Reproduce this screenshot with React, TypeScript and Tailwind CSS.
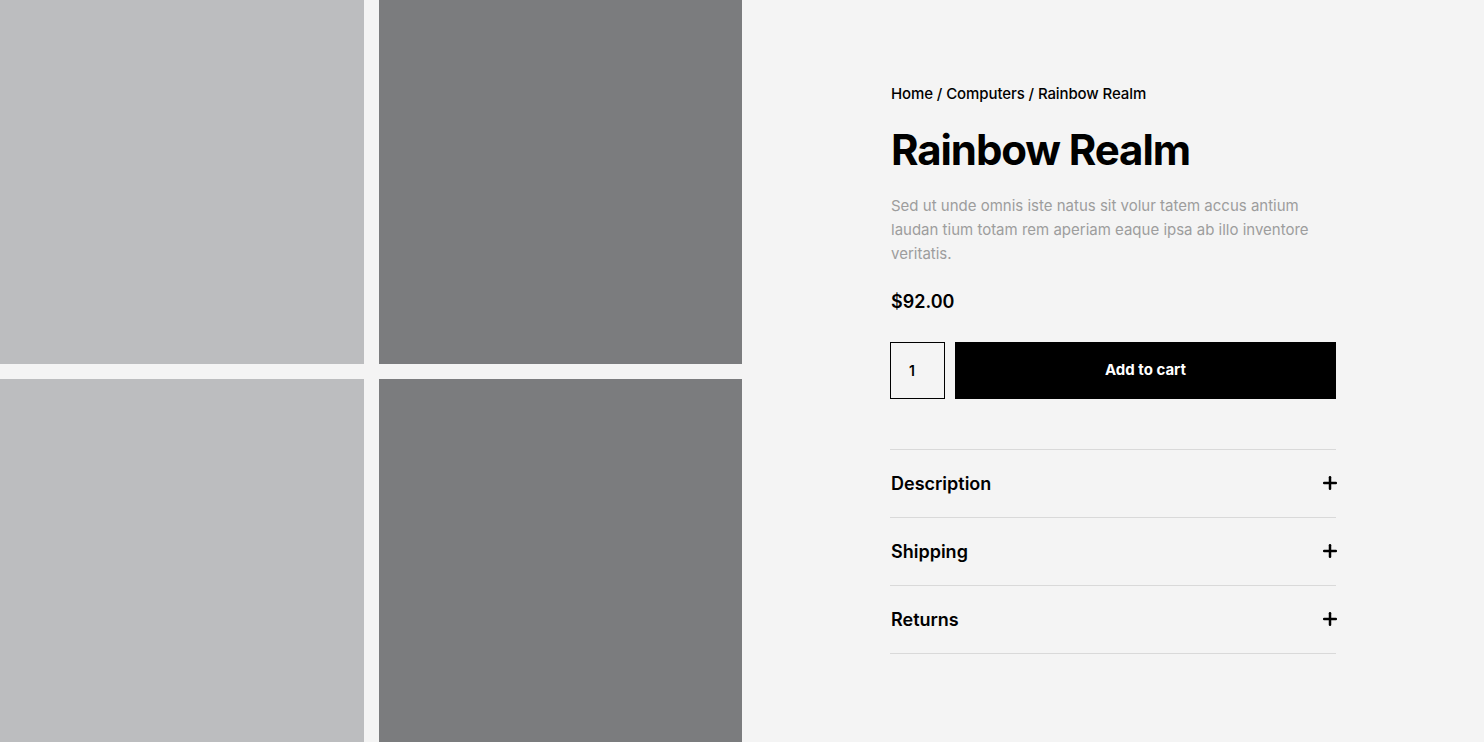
import { Plus } from "lucide-react";

const font = { fontFamily: "Inter, 'Noto Sans', sans-serif" };

const sections = ["Description", "Shipping", "Returns"];

export default function App() {
  return (
    <div className="flex h-[742px] w-full bg-[#f4f4f4] text-black" style={font}>
      <div className="grid h-[742px] w-[742px] shrink-0 grid-cols-2 grid-rows-2 gap-[15px]">
        <div className="bg-[#bcbdbf]" />
        <div className="bg-[#7b7c7e]" />
        <div className="bg-[#bcbdbf]" />
        <div className="bg-[#7b7c7e]" />
      </div>
      <div className="flex flex-1 items-center justify-center">
        <div className="w-[446px] pb-[7px]">
          <nav className="pl-px text-[15px] font-medium leading-6 tracking-[-0.1px]">
            Home / Computers / Rainbow Realm
          </nav>
          <h1 className="mt-[16px] pl-px text-[42px] font-bold leading-[56px] tracking-[-1.1px]">
            Rainbow Realm
          </h1>
          <p className="mt-[16px] pl-px text-[15px] leading-6 text-[#9d9d9d]">
            Sed ut unde omnis iste natus sit volur tatem accus antium laudan tium totam rem aperiam
            eaque ipsa ab illo inventore veritatis.
          </p>
          <div className="mt-[24px] pl-px text-[18px] font-semibold leading-6">$92.00</div>
          <div className="mt-[28px] flex gap-[10px]">
            <input
              defaultValue="1"
              className="h-[57px] w-[55px] border border-black bg-transparent px-[18px] text-[14px] font-semibold outline-none"
            />
            <button className="h-[57px] flex-1 bg-black text-[15px] font-bold text-white">
              Add to cart
            </button>
          </div>
          <div className="mt-[50px] border-b border-[#d9d9d9]">
            {sections.map((s) => (
              <div
                key={s}
                className="flex h-[68px] items-center justify-between border-t border-[#d9d9d9] pl-px"
              >
                <span className="text-[18px] font-semibold">{s}</span>
                <Plus size={20} strokeWidth={3} className="-mr-[4px]" />
              </div>
            ))}
          </div>
        </div>
      </div>
    </div>
  );
}
